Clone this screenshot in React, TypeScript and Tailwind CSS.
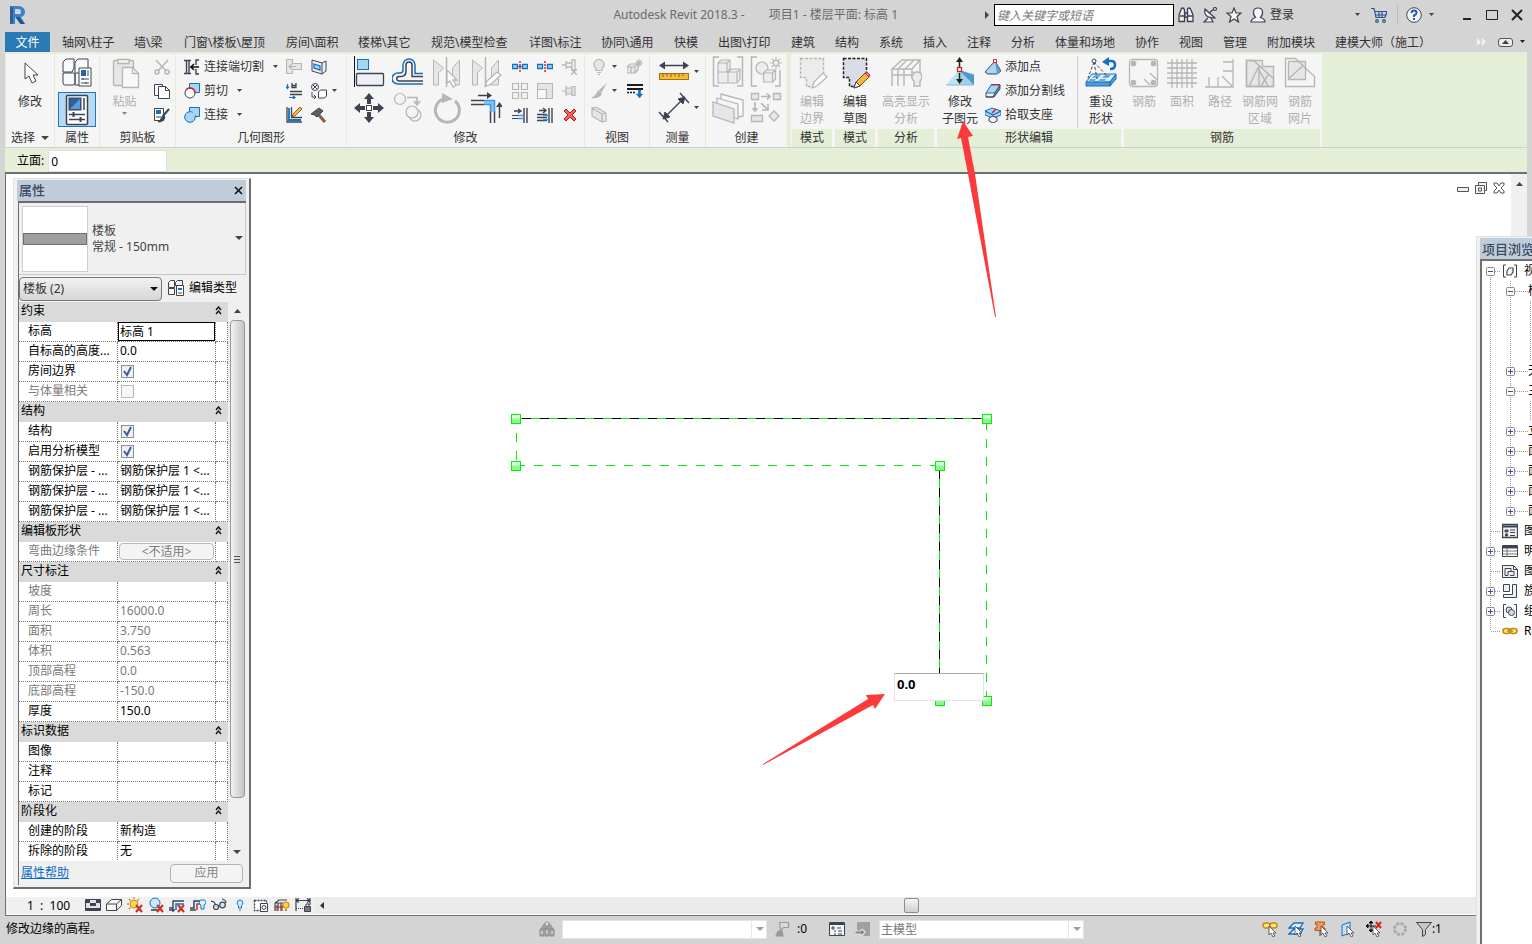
import React, { useState } from "react";
import type { ReactNode } from "react";

const D = "#3c4452";
const B = "#1470c0";
const L = "#a8d5f2";
const G = "#b6b6b6";
const F = "#e6e6e6";

// 32 x 32 drawings
const big: Record<string, ReactNode> = {
  cursor: <path d="M11 6v16l4-3 3 7 4-2-3-6h5z" fill="#fff" stroke={D} />,
  typeProps: (
    <g fill="#fafafa" stroke={D}>
      <path d="M2 15V6q0-1 1-2l2-2h8v9l-2 4zM14 15V6q0-1 1-2l2-2h10v9M2 16h12v10q0 2-2 2H4q-2 0-2-2zM14 16h6v12h-6z" />
      <path d="M18 11h12v18H18z" fill="#fff" />
      <path d="M20 13h5v6h-5z" fill="#2b62a4" stroke="none" />
      <path d="M27 13v6M20 22h8M20 26h8M22 21v2M25 25v2" />
    </g>
  ),
  props: (
    <g stroke={D} fill="#fff">
      <rect x="5.500" y="1.500" width="21" height="29" rx="1" strokeWidth="1.500" />
      <rect x="8" y="4" width="12" height="12" fill="#2b62a4" />
      <path d="M9 15L19 5v10z" fill="#5d9ad6" stroke="none" />
      <path d="M23 4v12M8 20.500h16M8 25.500h16" strokeWidth="1.500" />
      <path d="M12.500 18v5M19.500 23v5" strokeWidth="2" />
    </g>
  ),
  paste: (
    <g stroke={G} fill={F} strokeWidth="1.300">
      <rect x="4.500" y="3.500" width="20" height="25" rx="1" />
      <path d="M9 2.500h11v4H9z" fill="#f4f4f4" />
      <path d="M13.500 10.500h10l6 6v14h-16z" fill="#f8f8f8" />
      <path d="M23.500 10.500v6h6" fill="none" />
    </g>
  ),
  align: (
    <g stroke={D} fill="#eef0f5">
      <path d="M1.500 0v31" stroke="#111" />
      <rect x="4.500" y="3.500" width="11" height="10" fill={L} stroke={B} />
      <rect x="3.500" y="17.500" width="27" height="12" rx="1" strokeWidth="1.300" />
    </g>
  ),
  offset: (
    <g fill="none">
      <path d="M31 17.500H23V9a6 6 0 0 0-12 0v5q0 3-3 3H6a6 5.500 0 0 0 0 11h25" stroke={B} strokeWidth="1.500" />
      <path d="M31 20.500H20V9a3 3 0 0 0-6 0v6q0 5.500-5 5.500H7a2 2 0 0 0 0 4.500h24" stroke={D} strokeWidth="1.500" />
    </g>
  ),
  mirrorPick: (
    <g stroke={G} fill={F}>
      <path d="M2.500 4v25h5V17l5-5zM28.500 4v25h-7V12z" />
      <path d="M15.500 1v30" strokeWidth="1.500" />
      <path d="M16 14v13l3-2 3 6 3-2-3-5h4z" fill="#fff" strokeWidth="1.300" />
    </g>
  ),
  mirrorDraw: (
    <g stroke={G} fill={F}>
      <path d="M2.500 4v25h5V17l5-5zM28.500 4v25h-7V12z" />
      <path d="M15.500 1v30" strokeWidth="1.500" />
      <path d="M15 30l2-5 10-9 4 3-11 10z" fill="#fff" strokeWidth="1.300" />
    </g>
  ),
  move: (
    <g fill={D}>
      <path d="M16 1l5 6h-3v5h-4V7h-3zM16 31l5-6h-3v-5h-4v5h-3zM1 16l6-5v3h5v4H7v3zM31 16l-6-5v3h-5v4h5v3z" />
      <rect x="13.500" y="13.500" width="5" height="5" fill="#fff" stroke={D} />
    </g>
  ),
  copyObj: (
    <g fill="#f3f3f3" stroke={G} strokeWidth="1.200">
      <circle cx="8" cy="7" r="5.500" />
      <circle cx="23" cy="23" r="6" />
      <circle cx="20" cy="20" r="6" />
      <path d="M15 5.500h10v6M22 9l3 4 3-4" fill="none" strokeWidth="1.600" />
    </g>
  ),
  rotate: (
    <g>
      <path d="M14 6.500A12 12 0 1 0 24 9" fill="none" stroke={G} strokeWidth="3" />
      <path d="M11 1l11 6-11 4z" fill={G} />
    </g>
  ),
  trim: (
    <g fill="none">
      <path d="M1 8.500h13M1 12.500h13M20.500 19v12M24.500 19v12" stroke={D} strokeWidth="1.500" />
      <path d="M14 10.500h8.500V20" stroke="#8cc4f2" strokeWidth="3" />
      <path d="M14 8.500h10.500V20M14 12.500h6.500V20" stroke="#3f97e8" strokeWidth="1.500" />
      <path d="M8 3.500h10M29.500 13v13" stroke={D} strokeWidth="1.500" />
      <path d="M17 0v7l5-3.500zM26 15h7l-3.500-5z" fill={D} />
    </g>
  ),
  dimAligned: (
    <g>
      <path d="M5 9.500h22" stroke={D} strokeWidth="1.500" />
      <path d="M1 9.500l6-4v8zM31 9.500l-6-4v8z" fill={D} />
      <rect x="1.500" y="17.500" width="29" height="6" fill="#f3bd39" stroke="#a5700d" />
      <path d="M5 18v3M9 18v2M13 18v3M17 18v2M21 18v3M25 18v2" stroke="#8a5c08" />
    </g>
  ),
  measure: (
    <g stroke={D} fill="none">
      <path d="M6 26L26 6M1 20l9 10M22 1l9 10" strokeWidth="1.400" />
      <path d="M5 27l2-7 5 5zM27 5l-2 7-5-5z" fill={D} />
    </g>
  ),
  group: (
    <g stroke={G} fill="#ededed" strokeWidth="1.200">
      <path d="M7 1H1.500v29H7M25 1h5.500v29H25" fill="none" strokeWidth="1.500" />
      <path d="M6 7l3-3h9v9l-3 3H6zM6 16h10v11H6zM16 16l3-3h9v10l-3 4h-9z" />
      <path d="M6 7h9v9M15 7l3-3M16 16h9v11M25 16l3-3" fill="none" />
    </g>
  ),
  similar: (
    <g stroke={G} fill="#ededed" strokeWidth="1.200">
      <path d="M7 1H1.500v29H7M25 30h5V14" fill="none" strokeWidth="1.500" />
      <circle cx="12" cy="12" r="6" />
      <path d="M13.500 17l3-3h9v9l-3 3h-9zM13.500 17h9v9M22.500 17l3-3" />
      <path d="M26 1v12M20 7h12M22 3l8 8M30 3l-8 8" />
      <circle cx="26" cy="7" r="2.500" fill="#fff" />
    </g>
  ),
  assembly: (
    <g stroke={G} fill={F} strokeWidth="1.300">
      <path d="M9 2l22 6v16l-4 1L9 19z" fill="#fafafa" />
      <path d="M5 6l21 6v15l-21-6z" fill="#f4f4f4" />
      <path d="M1 10l21 7v14L1 24z" />
    </g>
  ),
  parts: (
    <g stroke={G} fill={F} strokeWidth="1.300">
      <path d="M1.500 1.500h7v6h-7zM23.500 1.500h7v6h-7zM1.500 23.500h11v6h-11zM19 24l5-5 5 5-5 5z" />
      <path d="M11 4.500h9M17 1.500l3 3-3 3M5 10v9M2.500 16L5 19l2.500-3M11 11l7 7M18 12v6h-6" fill="none" strokeWidth="1.600" />
    </g>
  ),
  editBoundary: (
    <g stroke={G} fill="#ececec">
      <path d="M4.500 1.500h23v19l-9 9h-8v-9h-6z" strokeDasharray="3 1.500" strokeWidth="1.500" />
      <path d="M16 31l2-6 9-9 4 4-10 9z" fill="#fafafa" strokeWidth="1.200" />
    </g>
  ),
  editSketch: (
    <g>
      <path d="M4.500 1.500h23v19l-9 9h-8v-9h-6z" fill="#d9dde6" stroke="#222" strokeDasharray="3 1.500" strokeWidth="1.500" />
      <path d="M15 31l2-6 9-9 4 4-9 9z" fill="#f6b73c" stroke="#7a4a0a" />
      <path d="M15 31l2-6 4 4z" fill="#fff" stroke={D} />
      <path d="M26 16l2-1 3 3-1 2z" fill="#e88" stroke="#a33" />
    </g>
  ),
  analytic: (
    <g stroke={G} fill="none" strokeWidth="1.400">
      <path d="M2 12l10-9h18l-8 9zM2 12v17M8 12v17M14 12v17M22 12v9M2 18h20M30 3v14M8 12l9-9M15 12l9-9" />
      <path d="M27 15a5 5 0 0 0-3 9v5h6v-5a5 5 0 0 0-3-9z" fill="#ececec" />
    </g>
  ),
  modifySub: (
    <g>
      <path d="M2 28L15 13v15z" fill="#bde3f4" />
      <path d="M15 13l15 4v11H15z" fill="#9fd0ea" />
      <path d="M15 13l15 5v10z" fill="#4f97c8" />
      <path d="M2 28h28" stroke="#8fb6cc" />
      <path d="M15.500 3v8M15.500 16v8" stroke="#222" strokeWidth="1.500" />
      <path d="M15.500 0l3.500 5h-7zM15.500 27l3.500-5h-7z" fill="#222" />
      <rect x="13.500" y="10.500" width="4" height="4" fill="#fff" stroke="#c8281e" strokeWidth="1.300" />
    </g>
  ),
  resetShape: (
    <g>
      <path d="M1 25l6-8h24l-6 8z" fill="#d9effa" stroke={B} />
      <path d="M1 25v4h24v-4zM25 25v4l6-7v-5z" fill="#4e9bd6" stroke={B} />
      <path d="M10 18h6l-3 3H7zM20 18h6l-3 3h-6zM5 22h6l-2 3H3zM15 22h6l-2 3h-6z" fill="#67acde" />
      <path d="M9 5L3 21M9 5l3 17M9 5l14 15" stroke={D} strokeDasharray="3 2" />
      <circle cx="9" cy="4" r="2" fill="#fff" stroke={D} />
      <path d="M22 4h4q4 0 4 4t-5 4" fill="none" stroke={B} strokeWidth="2.500" />
      <path d="M17 5l7-5v9z" fill={B} />
    </g>
  ),
  rebar: (
    <g stroke={G} fill="none" strokeWidth="1.300">
      <rect x="1.500" y="2.500" width="28" height="27" rx="3" />
      <g fill={G}><circle cx="5.500" cy="6.500" r="2.200" /><circle cx="25.500" cy="6.500" r="2.200" /><circle cx="5.500" cy="25.500" r="2.200" /><circle cx="25.500" cy="25.500" r="2.200" /></g>
      <path d="M16 22l6 6M22 16l7 7" />
    </g>
  ),
  area: <path d="M6 2v29M11 2v29M16 2v29M21 2v29M26 2v29M1 6h30M1 11h30M1 16h30M1 21h30M1 26h30" stroke={G} strokeWidth="1.300" />,
  path: <path d="M29 2v28H1M19 5h10M19 14h10M5 20v10M14 20v10M18 19l11 11" stroke={G} strokeWidth="1.300" fill="none" />,
  fabricArea: (
    <g stroke={G} strokeWidth="1.300" fill={F}>
      <path d="M2.500 3.500h16v6h11v20h-27z" />
      <path d="M2.500 3.500h7l20 18v8h-27zM15 9v20M5 29l9-18 10 18M17 29l7-11" fill="none" strokeWidth="1.500" />
    </g>
  ),
  fabric: (
    <g stroke={G} strokeWidth="1.300" fill="none">
      <path d="M4.500 4.500h17v18h-17z" fill={F} />
      <path d="M1.500 1.500h10l19 18v10h-29zM4.500 22l14-13" />
    </g>
  ),
};

const redX = <path d="M9 8l6 7M15 8l-6 7" stroke="#d22a1f" strokeWidth="2" />;
const arrowCursor = <path d="M7 5v9l2-2 2 4 2-1-2-3h3z" fill="#fff" stroke={D} strokeWidth=".8" />;

// 16 x 16 drawings
const small: Record<string, ReactNode> = {
  cut: (
    <g stroke={G} fill="none" strokeWidth="1.500">
      <path d="M2 1l10 11M14 1L4 12" /><circle cx="3" cy="13" r="2" /><circle cx="13" cy="13" r="2" />
    </g>
  ),
  copy: (
    <g stroke={D} fill="#fff"><path d="M.5 1.500h8v11h-8z" /><path d="M4.500 3.500h7l4 4v8h-11z" /><path d="M11.500 3.500v4h4" fill="none" /></g>
  ),
  match: (
    <g stroke={D} fill="#fff"><path d="M.5 1.500h9v12h-9z" /><path d="M2 3h5v4H2z" fill={B} stroke="none" /><path d="M2 10h5" /><path d="M15 2L9 9" strokeWidth="2" /><path d="M9 8l2 2q-1 5-7 5 3-2 5-7z" fill={D} /></g>
  ),
  cope: (
    <g stroke={D} fill="none"><path d="M0 1.500h7M2.500 1.500v13M5 1.500v13M0 14.500h7M15 1h-3v5M15 15h-3v-5" strokeWidth="1.400" /><path d="M6 8h9M10 5L7 8l3 3" stroke="#111" strokeWidth="1.500" /></g>
  ),
  cutGeo: (
    <g><path d="M5.500.5h10v9h-10z" fill={L} stroke={B} /><circle cx="6" cy="10" r="5" fill="#fff" stroke={D} /><path d="M2 7a5 5 0 0 1 9 3" fill="none" stroke="#d22a1f" strokeWidth="1.400" /></g>
  ),
  join: (
    <g fill={L} stroke={B}><path d="M5.500.5h10v9h-10z" /><circle cx="6" cy="10" r="5.300" /><path d="M6 5.500h5V9H6z" stroke="none" /></g>
  ),
  openW: <g stroke={G} fill={F} strokeWidth="1.200"><path d="M.5 .5h6v4h9v6h-9v4h-6z" /><path d="M3 7.500h7M6 5L3 7.500 6 10" /></g>,
  wallOpen: <g><path d="M1 1l10 3v11L1 12zM11 4l4-2v10l-4 3" fill="#eef0f5" stroke={D} /><path d="M3 5l6 2v4l-6-2z" fill={L} stroke={B} strokeWidth="1.300" /></g>,
  beam: <g fill="none"><path d="M4 8.500h12M4 11.500h12M6 0v4.500h4V0M6 2.500h4" stroke={D} strokeWidth="1.300" /><path d="M1.500 1v4M0 3.500l1.500 2 1.500-2M3 14.500h6M7 13l2 1.500L7 16" stroke={B} strokeWidth="1.200" /></g>,
  split: <g stroke={D} fill="#fff"><circle cx="4" cy="4" r="3.500" /><path d="M2 2l4 4M6 2L2 6M1 9v5h4M3 12l2 2-2 2M7.500 9l2-2h6v6l-2 2h-6z" /></g>,
  wallJoin: <g fill="none"><path d="M1 0v15h15M5.500 0v10.500H16" stroke={D} strokeWidth="1.300" /><path d="M3 1v12h12" stroke={B} strokeWidth="1.800" /><path d="M6 10l1-3 7-7 2 2-7 7z" fill="#f6b73c" stroke="#7a4a0a" strokeWidth=".8" /></g>,
  demolish: <g><path d="M6 6l8 9" stroke="#8a5a3a" strokeWidth="3" /><path d="M0 7l8-6 4 3-6 6q-3-3-6-3z" fill="#59606c" stroke={D} /></g>,
  splitEl: <g><path d="M.5 5.500h5v4h-5zM10.500 5.500h5v4h-5z" fill={L} stroke={B} strokeWidth="1.300" /><path d="M8 2v12" stroke="#d22a1f" strokeDasharray="2 1" strokeWidth="1.500" /><path d="M5 7.500h6" stroke={B} /></g>,
  splitGap: <g><path d="M.5 5.500h5v4h-5zM10.500 5.500h5v4h-5z" fill={L} stroke={B} strokeWidth="1.300" /><path d="M8 2v12" stroke="#d22a1f" strokeDasharray="2 1" strokeWidth="1.500" /></g>,
  unpin: <g fill="none" stroke={G} strokeWidth="1.300"><path d="M0 6h4M4 2v8M4 4h6M4 8h6M10 1v10h3V1zM9 10l6 6M15 10l-6 6" /></g>,
  array: <path d="M.5.500h6v6h-6zM9.500.500h6v6h-6zM.5 9.500h6v6h-6zM9.500 9.500h6v6h-6z" fill="#f3f3f3" stroke={G} strokeWidth="1.200" />,
  scale: <g fill={F} stroke={G} strokeWidth="1.200"><path d="M.5 .5h15v15H.5z" /><path d="M.5 6.500h9v9h-9z" fill="#f8f8f8" /></g>,
  pin: <g fill={F} stroke={G} strokeWidth="1.200"><path d="M0 8h4M4 3v10M4 5h6v6H4M10 3.500h3v9h-3z" /></g>,
  trim1: <g fill="none"><path d="M10 8.500H0M10 11.500H0" stroke={D} /><path d="M6 8.500h5M6 11.500h5" stroke="#3f97e8" strokeWidth="1.500" /><path d="M12 1v15M15 1v15M2 4h7M6 2l3 2-3 2" stroke={D} strokeWidth="1.400" /></g>,
  trim2: <g fill="none"><path d="M0 7.500h10M0 10.500h10M0 13.500h10" stroke={D} strokeWidth="1.300" /><path d="M6 8.500h5M6 12.500h5" stroke="#3f97e8" strokeWidth="1.500" /><path d="M12 1v15M15 1v15M2 3.500h7M6 1l3 2.500L6 6" stroke={D} strokeWidth="1.400" /></g>,
  del: <path d="M2 4l2-2 4 4 4-4 2 2-4 4 4 4-2 2-4-4-4 4-2-2 4-4z" fill="#f4605a" stroke="#b51f18" />,
  bulb: <g fill={F} stroke={G} strokeWidth="1.200"><path d="M8 .5a5 5 0 0 0-3 9v2h6v-2a5 5 0 0 0-3-9z" /><path d="M6 13.500h4M7 15.500h2" /></g>,
  hide: <g fill={F} stroke={G} strokeWidth="1.200"><path d="M0 8l3-3h7l-2 3zM0 8v6h8V8M8 14l3-3V5M4 8v6" /><path d="M12 0v8M8 4h8M9.500 1.500l5 5M14.500 1.500l-5 5" /></g>,
  brush: <g fill={G}><path d="M16 0L8 7l2 3zM7 7l4 4q-3 5-11 4 5-2 7-8z" /></g>,
  lines: <g stroke="#1b1b1b"><path d="M0 2h16" strokeWidth="2" /><path d="M0 9.500h9" strokeWidth="1.500" strokeDasharray="2 1" /><path d="M0 6h16" strokeWidth="2" /><path d="M11.500 7h2v4h2l-3 4-3-4h2z" fill={B} stroke={B} strokeWidth=".6" /></g>,
  ubox: <g fill={F} stroke={G} strokeWidth="1.200"><path d="M1 1l10 6v8L1 9zM1 1l4-1 10 6v8l-4 1M11 7l4-1" /></g>,
  addPoint: <g><path d="M0 13L10 2l6 10-4 3H3z" fill={L} stroke={D} /><path d="M10 2l2 13 4-3z" fill="#5b9cc4" /><path d="M8.500.5h3v3h-3z" fill="#fff" stroke="#c8281e" /></g>,
  addLine: <g><path d="M1 10l5-8h9l-5 8z" fill={L} stroke={B} /><path d="M1 10v4h7l2-4 5-8v4l-6 8H1" fill="#5b9cc4" stroke={D} /><path d="M6 1.500h9" stroke="#c8281e" /></g>,
  pickSup: <g><path d="M0 4l7-3 9 3-8 4zM0 4v4l8 3 8-3V4L8 8z" fill={L} stroke={B} /><path d="M7 6l4-4" stroke="#c8281e" strokeWidth="1.500" /><path d="M4 11l4-2 4 2v3l-4 2-4-2z" fill="#eef0f5" stroke={D} /></g>,
  editType: <g stroke={D} fill="#fafafa"><path d="M.5 2.500l2-2h4v7h-6zM7.500 2.500l2-2h5v5h-7zM.5 8.500h6v6h-6z" /><path d="M8.500 5.500h7v10h-7z" fill="#fff" /><path d="M10 8h4v2h-4z" fill={B} stroke="none" /><path d="M10 13h4" /></g>,
  binoc: <g stroke={D} fill="#eceff5" strokeWidth="1.300"><path d="M1 14.500V8l2-5q0-2 1.500-2t2 2v11.500zM9.500 14.500V3q0-2 1.500-2t2 2l2 5v6.500z" /><path d="M7 6h2.500v4H7zM2 9h4M10 9h5" /></g>,
  dish: <g stroke={D} fill="#eceff5" strokeWidth="1.200"><path d="M3 2q-2 9 10 9zM7 6l5-4M6 11l-4 4h9l-2-4" /><circle cx="13" cy="2" r="1.500" /></g>,
  star: <path d="M8 1l2 5h5l-4 3.500 1.500 5.500L8 12l-4.500 3L5 9.500 1 6h5z" fill="#f4f6fa" stroke={D} strokeWidth="1.200" />,
  user: <g fill="#f4f6fa" stroke={D} strokeWidth="1.200"><path d="M1 15q0-3 4.500-4.500Q3 8 3.500 4.500 4 1 8 1t4.500 3.500Q13 8 10.500 10.500 15 12 15 15z" /></g>,
  cart: <g stroke="#31548c" fill="#c9d6ea" strokeWidth="1.200"><path d="M0 1.500h3l2 9h9l2-6H4" /><path d="M5 8h10M8 5v5M11 5v5" /><circle cx="6" cy="14" r="1.300" /><circle cx="13" cy="14" r="1.300" /></g>,
  help: <g><circle cx="8" cy="8" r="7.300" fill="#f5f7fb" stroke={D} /><path d="M5.500 6Q5.500 3.500 8 3.500t2.500 2.300Q10.500 7.500 8 8.500v1.500" fill="none" stroke="#2359b5" strokeWidth="2" /><path d="M7 11h2v2H7z" fill="#2359b5" /></g>,
  detail: <g><path d="M.5 2.500h15v11H.5z" fill="#dfe3e9" stroke={D} /><path d="M1 3h4v3H1zM11 3h4v3h-4zM5 6h6v3H5zM1 11h14v2H1z" fill={D} /></g>,
  visual: <g fill="#f6f6f6" stroke={D}><path d="M.5 7l5-4.500h10v6l-5 5H.5zM.5 7h10v6.500M10.500 7l5-4.500" /></g>,
  sun: <g><circle cx="7" cy="7" r="4" fill="#ffd35a" stroke="#d08a10" /><path d="M7 0v2M0 7h2M2 2l1.500 1.500M12 2l-1.500 1.500M2 12l1.500-1.500" stroke="#d08a10" strokeWidth="1.300" />{redX}</g>,
  shadow: <g><circle cx="7" cy="6" r="5" fill="#cde8fa" stroke={B} /><path d="M3 13h7" stroke="#666" strokeWidth="2" />{redX}</g>,
  crop: <g fill="none"><path d="M0 11h4V4h11M0 13h6M4 9v6" stroke={D} strokeWidth="1.400" /><path d="M7 13V7h8" stroke={B} strokeWidth="1.500" />{redX}</g>,
  cropShow: <g fill="none"><path d="M0 11h4V4h7M0 13h6" stroke={D} strokeWidth="1.400" /><path d="M4 11V4h7" stroke={B} /><path d="M7 13V7h3" stroke="#d22a1f" strokeWidth="1.500" /><path d="M12.500 3a2.500 2.500 0 0 0-1.500 5v4h3V8a2.500 2.500 0 0 0-1.500-5z" fill="#dff1ff" stroke={B} /></g>,
  glasses: <g fill="#cfe6f5" stroke={D} strokeWidth="1.200"><path d="M0 4l3 1 2 3M15 6q0-3-4-4M7 10q1-2 2-1" fill="none" /><circle cx="5" cy="10" r="2.500" /><circle cx="11.500" cy="8" r="2.800" /></g>,
  bulbB: <g fill="#cfe9fb" stroke={B}><path d="M8 3a3 3 0 0 0-1.500 5.500V11h3V8.500A3 3 0 0 0 8 3z" /><path d="M7 13h2" /></g>,
  temp: <g stroke={D} fill="#fff"><path d="M1.500 3.500h12v10h-12z" strokeDasharray="2 1" strokeWidth="1.300" /><path d="M7.500 6.500h7v8h-7z" /><circle cx="11" cy="10.500" r="2" /></g>,
  anaB: <g fill="none" strokeWidth="1.200"><path d="M1 6l4-3h8M1 6v8M4 6v8M7 6v8M1 6h8M1 10h8" stroke={D} /><path d="M3 14V8M8 14V8" stroke="#d22a1f" /><circle cx="12" cy="8" r="3" fill="#ffcf4d" stroke="#d08a10" /><path d="M11 12h2v2h-2z" fill="#d08a10" /></g>,
  constr: <g stroke={D} fill="#777"><path d="M1 1v13M15 1v7M1 3.500h14M4 1.500l-3 2 3 2M12 1.500l3 2-3 2" fill="none" strokeWidth="1.200" /><path d="M1 11.500h8" strokeDasharray="1 1" /><path d="M9.500 9.500h6v5h-6z" /><path d="M11 9V7h3v2" fill="none" /></g>,
  workset: <g fill="#a2a2a2" stroke="#909090"><path d="M1 8h4v7H1zM6 7h4v8H6zM11 8h4v7h-4zM2 8l3-5h6l3 5z" /><circle cx="8" cy="3" r="2" fill="#e6e6e6" /><path d="M3 10v3M8 9v4M13 10v3" stroke="#eee" /></g>,
  request: <g fill="#d9d9d9" stroke="#9a9a9a" strokeWidth="1.200"><path d="M4.500 1.500h9v5h-5l-3 3z" /><path d="M1 15l2-5h4l1 5z" fill="#9a9a9a" /></g>,
  options: <g fill="#f4f6fa" stroke={D}><path d="M.5 1.500h15v13H.5z" /><path d="M1 3h14" strokeWidth="2" /><path d="M3 6h2v2H3zM5 10h2M5 13h2M8 7h4M9 10h4M9 13h4" /></g>,
  activeOpt: <g fill="#a0a0a0"><path d="M2 1h13v14H8l3-4-4-4v3H2z" /><path d="M0 10h6V8l4 3-4 4v-2H0z" fill="#8a8a8a" stroke="#eee" strokeWidth=".8" /></g>,
  link: <g fill="#ffe38a" stroke="#c18d0b" strokeWidth="1.600"><rect x="1" y="5.500" width="7" height="5" rx="2.500" /><rect x="8" y="5.500" width="7" height="5" rx="2.500" /><path d="M5 8h6" /></g>,
  selLink: <g><g fill="#ffe38a" stroke="#c18d0b" strokeWidth="1.400"><rect x="1" y="2" width="7" height="5" rx="2.500" /><rect x="8" y="2" width="7" height="5" rx="2.500" /></g>{arrowCursor}</g>,
  selUnder: <g><path d="M1 7l5-5h9l-3 5zM1 13l5-5h9l-3 5z" fill="#dff1ff" stroke={B} strokeWidth="1.300" />{arrowCursor}</g>,
  selPin: <g><path d="M1.500 1h9v2.500H9V7h2v2.500H1V7h2V3.500H1.500z" fill="#f29a5c" stroke="#b6541a" /><path d="M6 10v5" stroke={D} />{arrowCursor}</g>,
  selFace: <g><path d="M2 4l8-3v11l-8 3z" fill="#bfe1f7" stroke={B} />{arrowCursor}</g>,
  selDrag: <g><path d="M5 1v9M1 5h9M5 0L3 2h4zM5 11L3 9h4zM0 5l2-2v4z" stroke="#111" fill="#111" /><path d="M10 1l5 6M15 1l-5 6" stroke="#d22a1f" strokeWidth="2" />{arrowCursor}</g>,
  busy: <circle cx="8" cy="8" r="5.500" fill="none" stroke="#a9a9a9" strokeWidth="3" strokeDasharray="3 1.300" />,
  filter: <path d="M.5 1.500h15l-6 7v5l-3 2v-7z" fill="#c3c9d3" stroke={D} />,
  views: <g stroke={D} fill="none"><path d="M4 2H1.500v12H4M12 2h2.500v12H12" /><path d="M5 8l2-3h4v4l-2 3H5z" fill="#fff" strokeWidth="1.200" /></g>,
  legend: <g stroke={D} fill="#eef0f4"><path d="M.5 1.500h15v13H.5z" strokeWidth="1.300" /><path d="M1 3.500h14" strokeWidth="2" /><path d="M3 7h3v2H3z" fill="#777" /><path d="M8 7h5M8 9.500h5M8 12.500h5" /><circle cx="4.500" cy="12" r="1.200" fill={D} /></g>,
  sched: <g stroke={D} fill="#fff"><path d="M.5 2.500h15v11H.5z" /><path d="M1 4h14" strokeWidth="3" /><path d="M1 8h14M1 11h14M5 5v9" stroke="#777" /></g>,
  sheet: <g stroke={D} fill="#eef0f4"><path d="M.5 2.500h11l4 4v8H.5z" /><path d="M3 5.500h6v3H6v4H3zM8 8.500h4v4H8M11.500 2.500v4h4" fill="none" /></g>,
  family: <path d="M1.500 1.500h6v7h-6zM10.500 1.500h4v13h-13v-3h9z" stroke={D} fill="#eef0f4" />,
  groups: <g stroke={D} fill="#d7dbe2"><path d="M4 1.500H1.500v13H4M12 1.500h2.500v13H12" fill="none" /><circle cx="7" cy="7" r="3" /><circle cx="9.500" cy="9.500" r="3" /></g>,
};

function Big({ n }: { n: string }) {
  return <svg width="32" height="32" viewBox="0 0 32 32" className="shrink-0" aria-hidden>{big[n]}</svg>;
}
function Sm({ n }: { n: string }) {
  return <svg width="16" height="16" viewBox="0 0 16 16" className="shrink-0" aria-hidden>{small[n]}</svg>;
}
function Caret({ className = "text-[#444]" }: { className?: string }) {
  return <svg width="7" height="4" viewBox="0 0 7 4" className={"shrink-0 " + className} aria-hidden><path d="M1 0h5L3.500 3z" fill="currentColor" /></svg>;
}
function WideCaret() {
  return <svg width="8" height="5" viewBox="0 0 8 5" className="shrink-0" aria-hidden><path d="M0 0h8L4 4z" fill="#444" /></svg>;
}

const tabs: [string, string][] = [
  ["轴网\\柱子", "w-[72px]"], ["墙\\梁", "w-[50px]"], ["门窗\\楼板\\屋顶", "w-[102px]"], ["房间\\面积", "w-[72px]"],
  ["楼梯\\其它", "w-[73px]"], ["规范\\模型检查", "w-[98px]"], ["详图\\标注", "w-[72px]"], ["协同\\通用", "w-[73px]"],
  ["快模", "w-[44px]"], ["出图\\打印", "w-[73px]"], ["建筑", "w-[44px]"], ["结构", "w-[44px]"], ["系统", "w-[44px]"],
  ["插入", "w-[44px]"], ["注释", "w-[44px]"], ["分析", "w-[44px]"], ["体量和场地", "w-[80px]"], ["协作", "w-[44px]"],
  ["视图", "w-[44px]"], ["管理", "w-[44px]"], ["附加模块", "w-[68px]"], ["建模大师（施工）", "w-[110px]"],
];

type PanelProps = { title: string; width: string; green?: boolean; children: ReactNode; arrow?: boolean };

function Panel({ title, width, green, children, arrow }: PanelProps) {
  return (
    <section className={"flex shrink-0 flex-col border-r bg-[#f5f5f5] " + width + (green ? " border-[#f5f5f5]" : " border-[#e3eed5]")}>
      <div className="flex h-[75px] justify-center">{children}</div>
      <h2 className={"mx-px flex h-[18px] items-center justify-center gap-1.5 " + (green ? "bg-[#e5efd7]" : "")}>
        {title}
        {arrow && <WideCaret />}
      </h2>
    </section>
  );
}

function BigButton({ icon, lines, off, w = "w-[38px]", caret }: { icon: string; lines: string[]; off?: boolean; w?: string; caret?: boolean }) {
  return (
    <button className={"flex shrink-0 flex-col items-center pt-[3px] leading-[17px] " + w + (off ? " text-[#b0b0b0]" : "")}>
      <Big n={icon} />
      <span className="mt-1 whitespace-nowrap">
        {lines.map((l) => <span key={l} className="block">{l}</span>)}
      </span>
      {caret && <Caret className="mt-0.5 text-[#888]" />}
    </button>
  );
}

function SmallButton({ icon, text, caret }: { icon: string; text?: string; caret?: boolean }) {
  return (
    <button className="flex h-6 items-center gap-1 whitespace-nowrap" aria-label={text ?? icon}>
      <Sm n={icon} />
      {text}
      {caret && <Caret className={text ? "ml-1 text-[#444]" : "text-[#444]"} />}
    </button>
  );
}

function IconButton({ icon }: { icon: string }) {
  return (
    <button className="flex h-9 items-center justify-center" aria-label={icon}>
      <Big n={icon} />
    </button>
  );
}

function TitleBar() {
  return (
    <header className="flex h-[30px] items-center">
      <svg width="18" height="20" viewBox="0 0 18 20" className="ml-2 shrink-0" aria-label="Revit">
        <path d="M2 1h9q6 1 6 6 0 4-4 5l4 7h-5l-5-7v7H2z" fill="#3c82c4" />
        <path d="M2 1l3 2v15l-3 1z" fill="#2a5f9c" />
        <path d="M7 4h3q3 0 3 3t-3 2H7z" fill="#cfd6dd" />
        <path d="M11 12l6 7h-4l-5-7z" fill="#1b5594" />
      </svg>
      <h1 className="flex-1 whitespace-pre pr-[83px] text-right text-[#6b6b6b]">
        <span className="mr-6">Autodesk Revit 2018.3 -</span>项目1 - 楼层平面: 标高 1
      </h1>
      <div className="flex w-[551px] shrink-0 items-center">
        <svg width="13" height="8" viewBox="0 0 13 8" aria-hidden><path d="M4 0l4 4-4 4z" fill="#444" /></svg>
        <input aria-label="搜索" placeholder="键入关键字或短语" className="h-[22px] w-[180px] border border-black bg-white px-0.5 italic placeholder:text-[#777]" />
        <div className="ml-1 flex items-center gap-2">
          {["binoc", "dish", "star", "user"].map((n) => <button key={n} aria-label={n}><Sm n={n} /></button>)}
        </div>
        <button className="ml-1">登录</button>
        <span className="ml-[60px]"><Caret /></span>
        <button className="ml-2.5" aria-label="cart"><Sm n="cart" /></button>
        <span className="ml-2.5 h-5 w-px bg-[#bdbdbd]" />
        <button className="ml-2 flex items-center gap-1.5" aria-label="help"><Sm n="help" /><Caret /></button>
        <div className="ml-[26px] flex items-center gap-[13px]">
          <button aria-label="最小化"><svg width="12" height="12"><path d="M2 9h8v2H2z" fill="#222" /></svg></button>
          <button aria-label="最大化"><svg width="12" height="12"><path d="M.5 1.500h11v9H.5z" stroke="#222" fill="none" /></svg></button>
          <button aria-label="关闭"><svg width="12" height="12"><path d="M1 1l10 10M11 1L1 11" stroke="#222" strokeWidth="2" /></svg></button>
        </div>
      </div>
    </header>
  );
}

function Ribbon() {
  return (
    <div className="flex h-24 overflow-hidden border-b border-[#cfcfcf] bg-[#e5efd7] pt-0.5 pl-px">
      <Panel title="选择" width="w-[49px]" arrow>
        <BigButton icon="cursor" lines={["修改"]} />
      </Panel>
      <Panel title="属性" width="w-[45px]">
        <div className="flex flex-col items-center">
          <button aria-label="类型属性" className="flex h-[38px] items-center"><Big n="typeProps" /></button>
          <button aria-label="属性" className="flex h-[35px] w-[38px] items-center justify-center border border-[#1f75c8] bg-[#b9d9f3]"><Big n="props" /></button>
        </div>
      </Panel>
      <Panel title="剪贴板" width="w-[76px]">
        <BigButton icon="paste" lines={["粘贴"]} off caret />
        <div className="ml-2.5 pt-px">
          <SmallButton icon="cut" />
          <SmallButton icon="copy" />
          <SmallButton icon="match" />
        </div>
      </Panel>
      <Panel title="几何图形" width="w-[171px]">
        <div className="flex w-[102px] flex-col pt-px">
          <SmallButton icon="cope" text="连接端切割" caret />
          <SmallButton icon="cutGeo" text="剪切" caret />
          <SmallButton icon="join" text="连接" caret />
        </div>
        <div className="grid grid-cols-[25px_27px] content-start pt-px">
          <SmallButton icon="openW" />
          <SmallButton icon="wallOpen" />
          <SmallButton icon="beam" />
          <SmallButton icon="split" caret />
          <SmallButton icon="wallJoin" />
          <SmallButton icon="demolish" />
        </div>
      </Panel>
      <Panel title="修改" width="w-[238px]">
        <div className="grid grid-cols-4 content-start gap-x-[7px]">
          {["align", "offset", "mirrorPick", "mirrorDraw", "move", "copyObj", "rotate", "trim"].map((n) => <IconButton key={n} icon={n} />)}
        </div>
        <div className="ml-2.5 grid grid-cols-3 content-start gap-x-[9px] pt-px">
          {["splitEl", "splitGap", "unpin", "array", "scale", "pin", "trim1", "trim2", "del"].map((n) => <SmallButton key={n} icon={n} />)}
        </div>
      </Panel>
      <Panel title="视图" width="w-[65px]">
        <div className="grid grid-cols-[36px_16px] content-start pt-px">
          <SmallButton icon="bulb" caret />
          <SmallButton icon="hide" />
          <SmallButton icon="brush" caret />
          <SmallButton icon="lines" />
          <SmallButton icon="ubox" />
        </div>
      </Panel>
      <Panel title="测量" width="w-[56px]">
        <div className="grid grid-cols-[38px_7px] content-start items-center">
          <IconButton icon="dimAligned" />
          <Caret />
          <IconButton icon="measure" />
          <Caret />
        </div>
      </Panel>
      <Panel title="创建" width="w-[82px]">
        <div className="grid grid-cols-2 content-start gap-x-1.5">
          {["group", "similar", "assembly", "parts"].map((n) => <IconButton key={n} icon={n} />)}
        </div>
      </Panel>
      <div className="w-[3px] shrink-0" />
      <Panel title="模式" width="w-[43px]" green>
        <BigButton icon="editBoundary" lines={["编辑", "边界"]} off />
      </Panel>
      <Panel title="模式" width="w-[43px]" green>
        <BigButton icon="editSketch" lines={["编辑", "草图"]} />
      </Panel>
      <Panel title="分析" width="w-[59px]" green>
        <BigButton icon="analytic" lines={["高亮显示", "分析"]} off w="w-[52px] text-center" />
      </Panel>
      <Panel title="形状编辑" width="w-[187px]" green>
        <BigButton icon="modifySub" lines={["修改", "子图元"]} w="w-[44px] text-center" />
        <div className="ml-[3px] w-[92px] pt-px">
          <SmallButton icon="addPoint" text="添加点" />
          <SmallButton icon="addLine" text="添加分割线" />
          <SmallButton icon="pickSup" text="拾取支座" />
        </div>
        <span className="mt-0.5 mr-1 h-[72px] w-px bg-[#cdcdcd]" />
        <BigButton icon="resetShape" lines={["重设", "形状"]} />
      </Panel>
      <Panel title="钢筋" width="w-[199px]" green>
        <BigButton icon="rebar" lines={["钢筋"]} off />
        <BigButton icon="area" lines={["面积"]} off />
        <BigButton icon="path" lines={["路径"]} off />
        <BigButton icon="fabricArea" lines={["钢筋网", "区域"]} off w="w-[42px] text-center" />
        <BigButton icon="fabric" lines={["钢筋", "网片"]} off />
      </Panel>
    </div>
  );
}

type Row = { head?: string; name?: string; value?: string; kind?: "edit" | "on" | "off" | "button"; dim?: boolean };

const rows: Row[] = [
  { head: "约束" },
  { name: "标高", value: "标高 1", kind: "edit" },
  { name: "自标高的高度...", value: "0.0" },
  { name: "房间边界", kind: "on" },
  { name: "与体量相关", kind: "off", dim: true },
  { head: "结构" },
  { name: "结构", kind: "on" },
  { name: "启用分析模型", kind: "on" },
  { name: "钢筋保护层 - ...", value: "钢筋保护层 1 <..." },
  { name: "钢筋保护层 - ...", value: "钢筋保护层 1 <..." },
  { name: "钢筋保护层 - ...", value: "钢筋保护层 1 <..." },
  { head: "编辑板形状" },
  { name: "弯曲边缘条件", value: "<不适用>", kind: "button", dim: true },
  { head: "尺寸标注" },
  { name: "坡度", value: "", dim: true },
  { name: "周长", value: "16000.0", dim: true },
  { name: "面积", value: "3.750", dim: true },
  { name: "体积", value: "0.563", dim: true },
  { name: "顶部高程", value: "0.0", dim: true },
  { name: "底部高程", value: "-150.0", dim: true },
  { name: "厚度", value: "150.0" },
  { head: "标识数据" },
  { name: "图像", value: "" },
  { name: "注释", value: "" },
  { name: "标记", value: "" },
  { head: "阶段化" },
  { name: "创建的阶段", value: "新构造" },
  { name: "拆除的阶段", value: "无" },
];

function Check({ label, on, off }: { label: string; on: boolean; off?: boolean }) {
  const [checked, setChecked] = useState(on);
  return (
    <label className="relative mt-[3px] ml-[3px] block size-[13px]">
      <input
        type="checkbox"
        aria-label={label}
        checked={checked}
        disabled={off}
        onChange={(e) => setChecked(e.target.checked)}
        className="block size-[13px] appearance-none border border-[#8e8f8f] bg-[#eef0f4] disabled:border-[#b9b9b9] disabled:bg-[#f6f6f6]"
      />
      {checked && (
        <svg width="13" height="13" className="pointer-events-none absolute inset-0" aria-hidden>
          <path d="M3 6l3 4 4-8" stroke="#3f5c9e" strokeWidth="2" fill="none" />
        </svg>
      )}
    </label>
  );
}

function Value({ row }: { row: Row }) {
  if (row.kind === "edit") return <input aria-label={row.name} defaultValue={row.value} className="block h-[19px] w-full border border-black bg-white px-px pb-0.5" />;
  if (row.kind === "on" || row.kind === "off") return <Check label={row.name!} on={row.kind === "on"} off={row.kind === "off"} />;
  if (row.kind === "button") return <button className="mx-px mt-px block h-[17px] w-[95px] rounded-sm border border-[#b3bac0] bg-[#f4f4f4] leading-[15px]">{row.value}</button>;
  return <span className="pl-0.5">{row.value}</span>;
}

function Properties() {
  return (
    <aside className="relative w-[238px] border-t border-r-2 border-b-2 border-l border-t-[#e3e3e3] border-r-[#6d6d6d] border-b-[#6d6d6d] border-l-[#e3e3e3] bg-[#f0f0f0] pt-px pr-[3px] pb-0.5 pl-[3px]">
      <div className="flex h-[21px] items-center justify-between bg-[#bfcddb] pr-[3px] pb-px pl-0.5">
        <h2 className="text-[13px] font-medium text-[#3b4a5c]">属性</h2>
        <button aria-label="关闭"><svg width="9" height="9"><path d="M1 1l7 7M8 1L1 8" stroke="#111" strokeWidth="1.600" /></svg></button>
      </div>
      <div className="ml-px border-t-2 border-l border-[#6d6d6d]">
        <button className="flex h-[72px] w-full items-center border-r border-b border-[#c8c8c8] pr-0.5 pl-[3px] text-left text-[#444]">
          <span className="flex h-[66px] w-[66px] flex-col justify-center border border-[#cfcfcf] bg-white">
            <span className="block h-3 border border-[#6f6f6f] bg-[#9f9f9f]" />
          </span>
          <span className="ml-1 flex-1 pt-px leading-4">
            <span className="block">楼板</span>
            <span className="block">常规 - 150mm</span>
          </span>
          <WideCaret />
        </button>
        <div className="flex h-[27px] items-center">
          <div className="relative">
            <select aria-label="类型" className="block h-6 w-[143px] appearance-none rounded-sm border border-[#777] bg-linear-to-b from-[#f2f2f2] to-[#d6d6d6] px-[3px]">
              <option>楼板 (2)</option>
            </select>
            <svg width="8" height="5" className="pointer-events-none absolute top-2.5 right-1" aria-hidden><path d="M0 0h8L4 4z" fill="#111" /></svg>
          </div>
          <button className="ml-1.5 flex items-center gap-[5px] pb-px text-black"><Sm n="editType" />编辑类型</button>
        </div>
        <div className="flex h-[559px] overflow-hidden bg-white">
          <table className="w-[209px] table-fixed border-separate border-spacing-0 self-start leading-[17px] text-black">
            <colgroup><col className="w-[99px]" /><col className="w-[98px]" /><col className="w-3" /></colgroup>
            <tbody>
              {rows.map((r, i) =>
                r.head ? (
                  <tr key={i} className="h-5 bg-[#dadada]">
                    <th colSpan={3} className="p-0 pl-0.5 text-left align-top font-normal">
                      <div className="flex items-center justify-between pr-1.5">
                        {r.head}
                        <svg width="7" height="9" aria-hidden><path d="M1 4l2.500-3L6 4M1 8l2.500-3L6 8" stroke="#111" strokeWidth="1.400" fill="none" /></svg>
                      </div>
                    </th>
                  </tr>
                ) : (
                  <tr key={i} className={"h-5 " + (r.dim ? "text-[#7a7a7a]" : "")}>
                    <td className="overflow-hidden border-r border-b border-dotted border-[#777] p-0 pl-[9px] align-top whitespace-nowrap">{r.name}</td>
                    <td className="overflow-hidden border-r border-b border-dotted border-[#777] p-0 align-top whitespace-nowrap"><Value row={r} /></td>
                    <td className="border-r border-b border-dotted border-[#777] p-0" />
                  </tr>
                )
              )}
            </tbody>
          </table>
          <div className="flex flex-1 flex-col items-center bg-[#efefef]">
            <div className="flex h-[18px] items-center"><svg width="7" height="4"><path d="M0 4h7L3.500 0z" fill="#444" /></svg></div>
            <div className="flex h-[478px] w-[15px] flex-col items-center justify-center gap-0.5 rounded-sm border border-[#979797] bg-linear-to-r from-[#f3f3f3] to-[#c4c4c8]">
              <span className="h-px w-1.5 bg-[#555]" /><span className="h-px w-1.5 bg-[#555]" /><span className="h-px w-1.5 bg-[#555]" />
            </div>
            <div className="mt-auto flex h-[18px] items-center"><WideCaret /></div>
          </div>
        </div>
        <div className="flex h-6 items-center justify-between pr-[3px] pl-0.5">
          <a href="#help" className="text-[#0a6acb] underline">属性帮助</a>
          <button className="h-[19px] w-[73px] rounded-sm border border-[#adb2b5] bg-[#f4f4f4] leading-4 text-[#838383]">应用</button>
        </div>
      </div>
    </aside>
  );
}

const nodes = [[516, 419], [987, 419], [516, 466], [940, 466], [940, 701], [987, 701]];

function Sketch() {
  return (
    <>
      <svg width="1100" height="740" viewBox="6 174 1100 740" className="pointer-events-none absolute top-0 left-0" aria-hidden>
        <defs>
          <linearGradient id="node" x1="0" y1="0" x2="0" y2="1">
            <stop offset=".3" stopColor="#d9ffd9" /><stop offset=".6" stopColor="#8df58d" />
          </linearGradient>
        </defs>
        <path d="M521 418.500H982M939.500 471V673" stroke="#000" />
        <g stroke="#00ef00" strokeDasharray="9 9">
          <path d="M513 418.500H982M516 465.500H935M986.500 421V696M939.500 461V673M516.500 415V461" />
        </g>
        {nodes.map(([x, y]) => (
          <rect key={`${x}-${y}`} x={x - 4.5} y={y - 4.5} width="9" height="9" fill="url(#node)" stroke="#00f000" />
        ))}
      </svg>
      <input aria-label="高程" defaultValue="0.0" className="absolute top-[499px] left-[888px] h-7 w-[90px] border border-[#dfe2ea] border-t-[#a5a8ad] bg-white px-0.5 pb-1.5 text-[13px] font-bold text-black" />
    </>
  );
}

const viewIcons = ["detail", "visual", "sun", "shadow", "crop", "cropShow", "glasses", "bulbB", "temp", "anaB", "constr"];

function Workspace() {
  return (
    <main className="mr-[5px] ml-[5px] flex flex-1 flex-col border-t-2 border-b border-l border-[#707070] bg-white">
      <div className="flex flex-1">
        <div className="relative flex flex-1 items-start justify-between pt-1 pb-2 pl-[7px]">
          <Sketch />
          <Properties />
          <div className="mt-1 mr-1.5 flex items-center gap-1.5">
            <button aria-label="最小化"><svg width="12" height="12"><path d="M.5 5.500h11v4H.5z" fill="#eee" stroke="#555" /></svg></button>
            <button aria-label="还原"><svg width="12" height="12"><path d="M3.500.5h8v8h-2v3h-9v-8h3zM3.500 3.500h6v5M3.500 6h3v3h-3z" fill="#f2f2f2" stroke="#555" /></svg></button>
            <button aria-label="关闭"><svg width="12" height="12"><path d="M1 1h3l2 3 2-3h3v2L8 6l3 3v2H8L6 8l-2 3H1V9l3-3-3-3z" fill="#fff" stroke="#555" /></svg></button>
          </div>
        </div>
        <div className="flex w-4 flex-col items-center bg-[#f0f0f0] pt-2">
          <svg width="7" height="4"><path d="M0 4h7L3.500 0z" fill="#444" /></svg>
        </div>
      </div>
      <div className="mb-px flex h-[17px] items-center bg-[#f0f0f0] text-black">
        <span className="w-[79px] pl-[21px] whitespace-pre">1  :  100</span>
        <div className="flex items-center gap-[5px] pb-px">
          {viewIcons.map((n) => <button key={n} aria-label={n}><Sm n={n} /></button>)}
        </div>
        <div className="ml-1 flex h-full flex-1 items-center bg-[#ebebeb]">
          <svg width="5" height="7" className="ml-1"><path d="M5 0v7L1 3.500z" fill="#333" /></svg>
          <span className="ml-[580px] h-[15px] w-[15px] rounded-xs border border-[#8d8d8d] bg-linear-to-b from-[#f6f6f6] to-[#cfcfcf]" />
        </div>
      </div>
    </main>
  );
}

function StatusSelect({ label, value }: { label: string; value: string }) {
  return (
    <div className="relative">
      <select aria-label={label} disabled className="block h-[19px] w-[205px] appearance-none border border-[#e4e4e4] bg-white px-px leading-[17px] text-[#777] opacity-100">
        <option>{value}</option>
      </select>
      <span className="pointer-events-none absolute top-0 right-0 flex h-full w-4 items-center justify-center border-l border-[#e8e8e8]">
        <svg width="8" height="5" viewBox="0 0 8 5" aria-hidden><path d="M0 0h8L4 4z" fill="#a0a0a0" /></svg>
      </span>
    </div>
  );
}

function StatusBar() {
  return (
    <footer className="flex h-7 items-center pb-0.5 text-black">
      <span className="w-[539px] shrink-0 pl-1.5">修改边缘的高程。</span>
      <Sm n="workset" />
      <div className="ml-[7px] flex items-center">
        <StatusSelect label="工作集" value="" />
        <span className="mr-1.5 ml-2"><Sm n="request" /></span>
        <span className="w-8">:0</span>
        <Sm n="options" />
        <span className="mr-2 ml-2.5"><Sm n="activeOpt" /></span>
        <StatusSelect label="设计选项" value="主模型" />
      </div>
      <div className="mr-[90px] ml-auto flex items-center gap-2.5">
        {["selLink", "selUnder", "selPin", "selFace", "selDrag", "busy"].map((n) => <button key={n} aria-label={n}><Sm n={n} /></button>)}
        <button className="-ml-0.5 flex items-center" aria-label="过滤器"><Sm n="filter" />:1</button>
      </div>
    </footer>
  );
}

type TreeNode = { level: number; text?: string; icon?: string; box?: "+" | "-" };

const tree: TreeNode[] = [
  { level: 0, text: "视图 (全部)", icon: "views", box: "-" },
  { level: 1, text: "楼层平面", box: "-" },
  { level: 2 }, { level: 2 }, { level: 2 },
  { level: 1, text: "天花板平面", box: "+" },
  { level: 1, text: "三维视图", box: "-" },
  { level: 2 },
  { level: 1, text: "立面 (建筑立面)", box: "+" },
  { level: 1, text: "面积平面 (人防分区面积)", box: "+" },
  { level: 1, text: "面积平面 (净面积)", box: "+" },
  { level: 1, text: "面积平面 (总建筑面积)", box: "+" },
  { level: 1, text: "面积平面 (防火分区面积)", box: "+" },
  { level: 0, text: "图例", icon: "legend" },
  { level: 0, text: "明细表/数量", icon: "sched", box: "+" },
  { level: 0, text: "图纸 (全部)", icon: "sheet" },
  { level: 0, text: "族", icon: "family", box: "+" },
  { level: 0, text: "组", icon: "groups", box: "+" },
  { level: 0, text: "Revit 链接", icon: "link" },
];

function Twig({ box, branch, top = true, bottom = true }: { box?: string; branch?: boolean; top?: boolean; bottom?: boolean }) {
  return (
    <svg width="20" height="20" className="shrink-0" aria-hidden>
      <g stroke="#999" strokeDasharray="1 1">
        {top && <path d="M9.500 0v10" />}
        {bottom && <path d="M9.500 10v10" />}
        {branch && <path d="M10 10.500h10" />}
      </g>
      {box && (
        <g stroke="#888">
          <rect x="5.500" y="6.500" width="8" height="8" rx="1" fill="#fafafa" />
          <path d={box === "+" ? "M7 10.500h5M9.500 8v5" : "M7 10.500h5"} stroke="#3554a0" />
        </g>
      )}
    </svg>
  );
}

function Browser() {
  return (
    <aside className="absolute top-[236px] -right-[184px] bottom-0 flex w-60 flex-col border-t border-l border-[#e3e3e3] bg-[#f0f0f0] pt-px pl-[3px]">
      <h2 className="flex h-[21px] shrink-0 items-center bg-[#bfcddb] pl-0.5 text-[13px] font-medium whitespace-nowrap text-[#3b4a5c]">项目浏览器 - 项目1</h2>
      <ul className="flex-1 border-t-2 border-l-2 border-[#707070] bg-white whitespace-nowrap text-black">
        {tree.map((n, i) => (
          <li key={i} className="flex h-5 items-center">
            <span className="-ml-px"><Twig box={n.level === 0 ? n.box : undefined} branch={n.level === 0} top={i > 0} bottom={i < tree.length - 1} /></span>
            {n.level === 0 && <><span className="mx-px"><Sm n={n.icon!} /></span><span className="pl-[5px]">{n.text}</span></>}
            {n.level === 1 && <><Twig box={n.box} branch bottom={i !== 12} /><span className="w-[7px] border-t border-dotted border-[#999]" /><span>{n.text}</span></>}
            {n.level === 2 && <><Twig /><Twig /></>}
          </li>
        ))}
      </ul>
    </aside>
  );
}

export default function App() {
  return (
    <div className="relative flex min-h-screen flex-col overflow-hidden bg-[#d4d4d4] [font-family:'Noto_Sans','Noto_Sans_CJK_SC',sans-serif] text-[12px] leading-4 text-[#333]">
      <TitleBar />
      <nav className="mt-0.5 flex h-5 items-center pl-[5px]">
        <button className="mr-3 h-5 w-[45px] shrink-0 bg-[#2a7ab5] pt-0.5 text-white">文件</button>
        {tabs.map(([t, w]) => <button key={t} className={"shrink-0 pt-0.5 text-left whitespace-nowrap " + w}>{t}</button>)}
        <div className="mr-2 ml-auto flex items-center gap-1.5">
          <svg width="9" height="8"><path d="M0 0l4 4-4 4zM5 0l4 4-4 4z" fill="#f3f3f3" /></svg>
          <button className="ml-1.5 flex h-[9px] w-[15px] items-center justify-center rounded-[3px] border border-[#555] bg-[#eee]" aria-label="折叠"><svg width="7" height="4"><path d="M0 4h7L3.500 0z" fill="#444" /></svg></button>
          <Caret className="-mr-0.5 text-[#222]" />
        </div>
      </nav>
      <div className="mx-[5px]">
        <Ribbon />
        <div className="flex h-6 items-center bg-[#e5efd7] pl-3 text-black">
          <label htmlFor="elev" className="pt-0.5">立面:</label>
          <input id="elev" defaultValue="0" className="ml-1 h-[22px] w-[119px] self-end border border-[#e0e0e0] bg-white px-0.5" />
        </div>
      </div>
      <Workspace />
      <StatusBar />
      <Browser />
      <svg width="1100" height="800" className="pointer-events-none absolute top-0 left-0" aria-hidden>
        <path d="M963 121l10 15-5 1 7 37 21 143h-1l-27-143-7-36-4 1z" fill="#fb3b3b" />
        <path d="M885 694l-10 15-2-4-110 60v-1l105-65-2-4z" fill="#fb3b3b" />
      </svg>
    </div>
  );
}
